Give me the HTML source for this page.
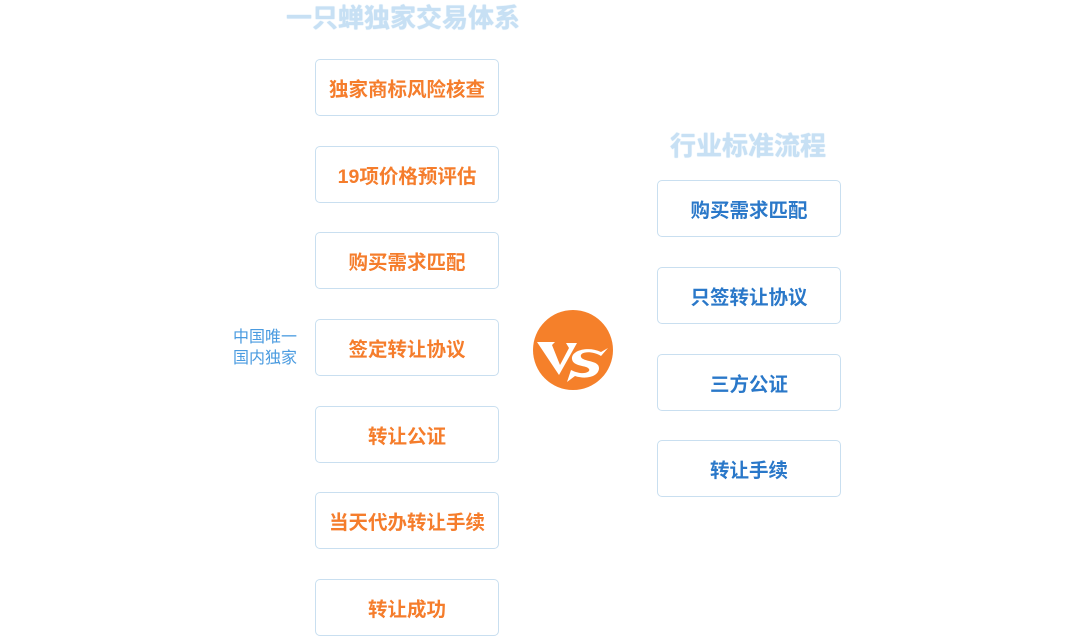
<!DOCTYPE html><html><head><meta charset="utf-8"><style>
body{margin:0;width:1071px;height:637px;background:#fff;position:relative;overflow:hidden;font-family:"Liberation Sans","Noto Sans CJK SC",sans-serif}
.b{position:absolute;width:182px;height:55px;border:1px solid #c9dff0;border-radius:5px;box-sizing:content-box;display:flex;align-items:center;justify-content:center;font-weight:bold;font-size:19.5px}
.l{left:315px;color:#f57d2c}.r{left:657px;color:#2a78c9}
.t{position:absolute;font-weight:bold;font-size:26px;line-height:30px;color:#c7e0f4;text-shadow:0 0 1px #a9d0ee;letter-spacing:0}
</style></head><body>
<div class="t" style="left:286px;top:3px">一只蝉独家交易体系</div>
<div class="t" style="left:670px;top:131px">行业标准流程</div>
<div class="b l" style="top:59px">独家商标风险核查</div>
<div class="b l" style="top:146px">19项价格预评估</div>
<div class="b l" style="top:232px">购买需求匹配</div>
<div class="b l" style="top:319px">签定转让协议</div>
<div class="b l" style="top:406px">转让公证</div>
<div class="b l" style="top:492px">当天代办转让手续</div>
<div class="b l" style="top:579px">转让成功</div>
<div class="b r" style="top:180px">购买需求匹配</div>
<div class="b r" style="top:267px">只签转让协议</div>
<div class="b r" style="top:354px">三方公证</div>
<div class="b r" style="top:440px">转让手续</div>
<div style="position:absolute;left:233px;top:327px;color:#4a9be0;font-size:16px;line-height:21px">中国唯一<br>国内独家</div>
<svg style="position:absolute;left:533px;top:310px" width="80" height="80" viewBox="0 0 80 80">
<circle cx="40" cy="40" r="40" fill="#f5802a"/>
<path d="M4 32 L22 32 L19 35 L27 55 L36 38 L33 33 L44 33 L26 65 Z" fill="#fff"/>
<path d="M75 38 L68 46 C58 40 46 42 48 47 C50 52 66 50 66 58 C66 66 54 70 42 66 L34 72 L38 60 C50 66 58 62 56 59 C54 55 40 57 39 49 C38 40 56 36 68 42 Z" fill="#fff"/>
</svg>
</body></html>
